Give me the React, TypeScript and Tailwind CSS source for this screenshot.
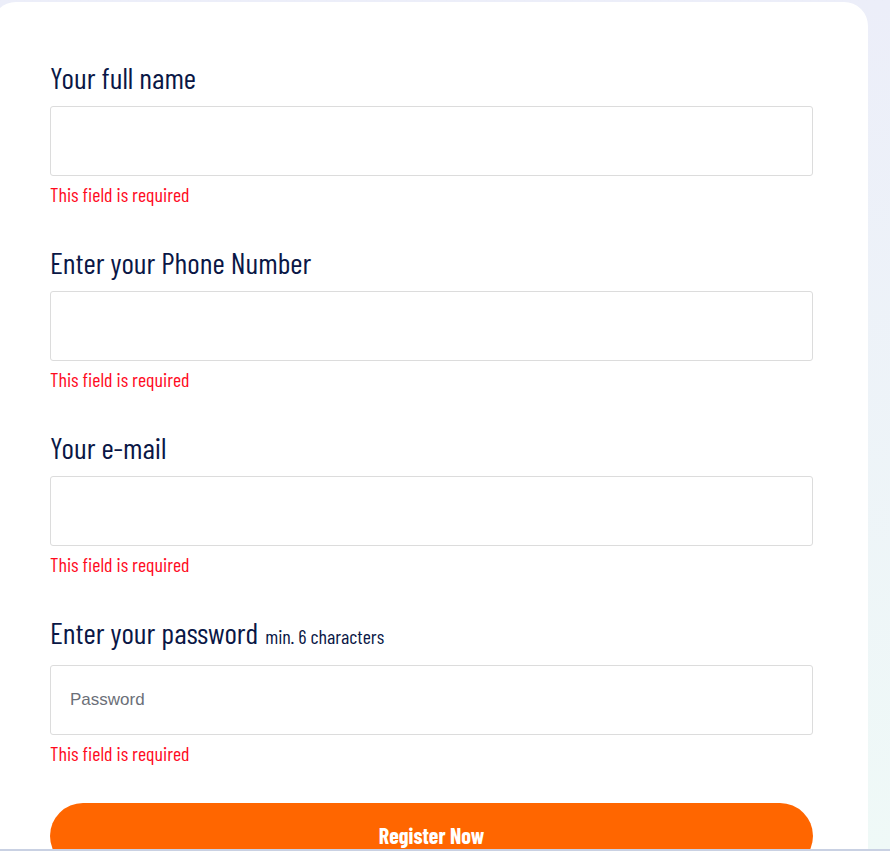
import React from "react";

const font = { fontFamily: "'Barlow Condensed', 'Roboto Condensed', 'DejaVu Sans Condensed', sans-serif" };

function Field({ label, extra, placeholder, last }: { label: string; extra?: string; placeholder?: string; last?: boolean }) {
  return (
    <div className={last ? "" : "mb-[41px]"}>
      <div className={`h-[32px] whitespace-nowrap text-[30px] leading-[28px] text-[#0a1746] ${extra ? "mb-[15px]" : "mb-[11px]"}`}>
        {label}
        {extra && <span className="text-[20px] ml-[3px]"> {extra}</span>}
      </div>
      <input
        type="text"
        placeholder={placeholder}
        className="block w-[763px] h-[70px] border border-[#dcdcdc] rounded-[3px] bg-white px-[19px] text-[17px] text-[#333] placeholder:text-[#6b6f78] outline-none"
        style={{ fontFamily: "'Liberation Sans', Arial, sans-serif" }}
      />
      <div className="mt-[7px] h-[24px] whitespace-nowrap text-[20px] leading-[22px] text-[#ff0a1e]">This field is required</div>
    </div>
  );
}

export default function App() {
  return (
    <div className="w-[890px] h-[851px] overflow-hidden relative bg-gradient-to-b from-[#eceef9] to-[#eff9f7]" style={font}>
      <div className="mt-[2px] -ml-[8px] w-[876px] h-[900px] bg-white rounded-[24px] pl-[58px] pt-[61px]">
        <Field label="Your full name" />
        <Field label="Enter your Phone Number" />
        <Field label="Your e-mail" />
        <Field label="Enter your password" extra="min. 6 characters" placeholder="Password" last />
        <button className="mt-[37px] w-[763px] h-[66px] rounded-full bg-[#ff6600] text-white flex items-center justify-center pb-[2px]">
          <span className="text-[22px] font-bold leading-[24px]">Register Now</span>
        </button>
      </div>
      <div className="absolute left-0 right-0 bottom-0 h-[2px] bg-[#c9d1e3]" />
    </div>
  );
}
